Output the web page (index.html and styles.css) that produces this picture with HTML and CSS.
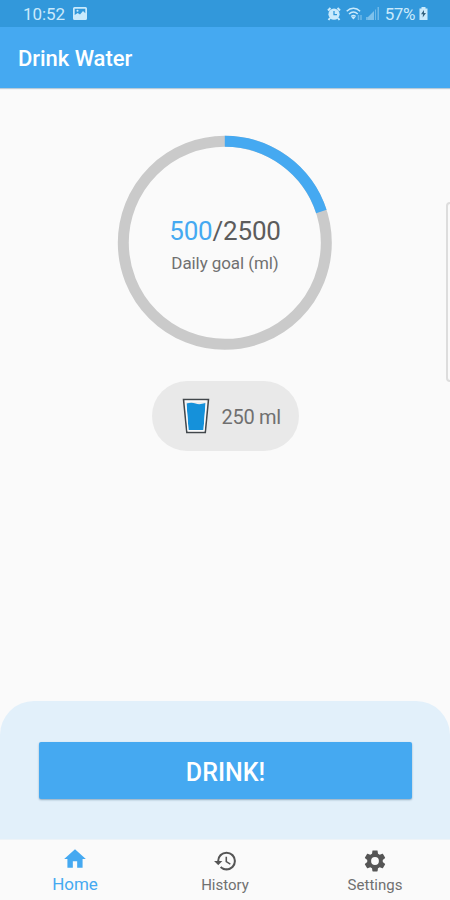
FILE: index.html
```html
<!DOCTYPE html>
<html lang="en">
<head>
<meta charset="utf-8">
<title>Drink Water</title>
<link rel="stylesheet" href="styles.css">
</head>
<body>
<div class="status">
  <span class="time">10:52</span>
  <svg class="photo" width="14" height="13" viewBox="0 0 14 13"><path fill="currentColor" fill-rule="evenodd" d="M1.5 0h11A1.5 1.5 0 0 1 14 1.500v10a1.500 1.500 0 0 1-1.500 1.500h-11A1.500 1.500 0 0 1 0 11.500v-10A1.500 1.500 0 0 1 1.500 0zM1.700 1.800v6.200l3-2 2.300 1.500 3-3.500 2.300 2.200V1.800z"/><circle cx="4.500" cy="3.800" r="1" fill="currentColor"/></svg>
  <span class="spacer"></span>
  <svg class="alarm" width="14" height="14" viewBox="0 0 14 14"><g fill="none" stroke="currentColor" stroke-width="2"><path d="M1 3.500 3.500 1M13 3.500 10.500 1M3 11l-1.500 2M11 11l1.500 2"/></g><circle cx="7" cy="7.200" r="5.600" fill="currentColor"/><path class="hands" d="M7 4v3.600h3"/></svg>
  <svg class="wifi" width="17" height="14" viewBox="0 0 17 14"><g fill="none" stroke="currentColor" stroke-width="1.500"><path d="M.7 4.200c4-3.800 9.500-3.800 13.400 0M3 7c2.700-2.500 6.200-2.500 8.800 0M5.200 9.500c1.500-1.300 3-1.300 4.500 0"/></g><path d="m5.400 10.200 2 2.400 2-2.400q-2-1.500-4 0z" fill="currentColor"/><path class="faint" d="M12.500 8v5M15 8v5" stroke="currentColor" stroke-width="1.500"/></svg>
  <svg class="signal" width="13" height="13" viewBox="0 0 13 13"><path class="faint" d="M0 13h1.500v-3H0zM9 13h1V2.500H9zM11.500 13H13V0h-1.500z" fill="currentColor"/><path d="M1.500 13v-2.500L8 4v9z" fill="currentColor" opacity=".5"/></svg>
  <span class="percent">57%</span>
  <svg class="battery" width="9" height="13" viewBox="0 0 9 13"><path fill="currentColor" d="M2.500 0h4v1.500H8.500V13H.5V1.500h2z"/><path class="bolt" d="m5 3-3 4.300h2L3.700 10.500 7 6H5z"/></svg>
</div>
<header class="bar">Drink Water</header>
<main class="content">
  <div class="ring">
    <svg class="dial" viewBox="0 0 216 216"><circle class="track" cx="108" cy="108" r="101.700"/><circle class="value" cx="108" cy="108" r="101.700" pathLength="100" transform="rotate(-90 108 108)"/></svg>
    <div class="label">
      <div class="amount"><span class="current">500</span>/2500</div>
      <div class="goal">Daily goal (ml)</div>
    </div>
  </div>
  <div class="cup">
    <svg width="28" height="36" viewBox="0 0 28 36"><path d="M1.500 1.500h25L23.300 34.500H4.800z" fill="#eee" stroke="#42474b" stroke-width="1.500"/><path d="M4.500 5.500q5-1.500 9 0t10-.5L21.500 32H6.500z" fill="#1591da"/><path d="M3 3.200h21.500M3.800 4.500 6.100 32.800h15.800L24.300 4" fill="none" stroke="#fff" stroke-width="1"/></svg>
    <span class="volume">250 ml</span>
  </div>
  <div class="edge"></div>
</main>
<section class="panel"><button class="drink">DRINK!</button></section>
<nav class="tabs">
  <a class="tab active"><svg width="26" height="26" viewBox="0 0 24 24"><path fill="currentColor" d="M10 20v-6h4v6h5v-8h3L12 3 2 12h3v8z"/></svg><span>Home</span></a>
  <a class="tab"><svg width="25" height="25" viewBox="0 0 24 24"><path fill="currentColor" d="M13 3a9 9 0 0 0-9 9H1l3.890 3.890.07.14L9 12H6c0-3.870 3.130-7 7-7s7 3.130 7 7-3.130 7-7 7c-1.930 0-3.680-.79-4.940-2.060l-1.420 1.420A8.950 8.950 0 0 0 13 21a9 9 0 0 0 0-18zm-1 5v5l4.280 2.540.72-1.210-3.500-2.080V8z"/></svg><span>History</span></a>
  <a class="tab"><svg width="26" height="26" viewBox="0 0 24 24"><path fill="currentColor" d="M19.140 12.940c.04-.3.060-.61.060-.94 0-.32-.02-.64-.07-.94l2.030-1.580c.18-.14.230-.41.120-.61l-1.920-3.320c-.12-.22-.37-.29-.59-.22l-2.390.96c-.5-.38-1.030-.7-1.620-.94l-.36-2.540c-.04-.24-.24-.41-.48-.41h-3.840c-.24 0-.43.17-.47.41l-.36 2.540c-.59.240-1.130.57-1.620.94l-2.390-.96c-.22-.08-.47 0-.59.22L2.740 8.870c-.12.210-.08.470.12.610l2.030 1.580c-.05.300-.09.630-.09.940s.02.640.07.940l-2.030 1.580c-.18.140-.23.410-.12.610l1.920 3.320c.12.220.37.290.59.220l2.390-.96c.5.380 1.030.7 1.620.94l.36 2.540c.05.240.24.410.48.410h3.840c.24 0 .44-.17.47-.41l.36-2.540c.59-.24 1.130-.56 1.620-.94l2.390.96c.22.080.47 0 .59-.22l1.920-3.320c.12-.22.070-.47-.12-.61zM12 15.600A3.600 3.600 0 1 1 12 8.400a3.600 3.600 0 0 1 0 7.200z"/></svg><span>Settings</span></a>
</nav>
</body>
</html>
```
FILE: styles.css
```css
* { box-sizing: border-box; }
body {
  margin: 0;
  width: 450px;
  height: 900px;
  display: flex;
  flex-direction: column;
  overflow: hidden;
  background: #fafafa;
  font-family: Roboto, sans-serif;
  color: #707070;
}
svg { display: block; flex: none; }
.status {
  height: 27px;
  display: flex;
  align-items: center;
  padding: 0 22px 0 23px;
  background: #3298db;
  color: #caeafc;
  font-size: 17px;
}
.time { letter-spacing: -.1px; }
.photo { margin-left: 8px; }
.spacer { flex: 1; }
.hands { fill: none; stroke: #3298db; stroke-width: 1.300; }
.wifi { margin-left: 5px; }
.signal { margin-left: 3px; }
.faint { opacity: .4; }
.percent { margin-left: 6px; letter-spacing: -.4px; }
.battery { margin-left: 4px; }
.bolt { fill: #34627e; }
.bar {
  height: 61px;
  padding-left: 18px;
  line-height: 64px;
  background: #45a9f1;
  box-shadow: 0 1px 1px #b9cbd8;
  color: #fff;
  font-size: 22px;
  font-weight: 500;
  letter-spacing: -.05px;
}
.content {
  position: relative;
  flex: 1;
  display: flex;
  flex-direction: column;
  align-items: center;
  padding-top: 47px;
}
.ring { display: grid; width: 216px; height: 216px; }
.dial, .label { grid-area: 1 / 1; }
.dial { margin-left: .4px; }
.track, .value { fill: none; stroke: #cacaca; stroke-width: 11; }
.value { stroke: #45a9f1; stroke-dasharray: 20 80; }
.label { padding-top: 79px; text-align: center; }
.amount { font-size: 26px; line-height: 34px; color: #5c5c5c; letter-spacing: -.2px; }
.current { color: #45a9f1; }
.goal { font-size: 17px; line-height: 30px; letter-spacing: -.08px; }
.cup {
  width: 147px;
  height: 70px;
  margin-top: 30px;
  border-radius: 35px;
  display: flex;
  align-items: center;
  gap: 12px;
  padding-left: 30px;
  background: #e9e9e9;
  font-size: 20px;
}
.volume { padding-top: 2px; letter-spacing: -.3px; }
.edge {
  position: absolute;
  right: -4px;
  top: 114px;
  width: 8px;
  height: 180px;
  border: 2px solid #ddd;
  border-radius: 6px;
}
.panel {
  height: 138px;
  padding: 41px 38px 0 39px;
  background: #e2f0fa;
  border-radius: 34px 34px 0 0;
}
.drink {
  display: block;
  width: 100%;
  height: 57px;
  padding: 3px 0 0;
  border: 0;
  border-radius: 2px;
  background: #45a9f1;
  box-shadow: 0 1px 2px #91aabd;
  color: #fff;
  font: 500 25px Roboto, sans-serif;
}
.tabs {
  height: 61px;
  display: grid;
  grid-template-columns: repeat(3, 1fr);
  border-top: 1px solid #edf3f7;
}
.tab {
  display: flex;
  flex-direction: column;
  align-items: center;
  padding-top: 8px;
  font-size: 15px;
  line-height: 22px;
}
.tab svg { height: 26px; color: #555; }
.active { padding-top: 6px; color: #45a9f1; font-size: 17px; line-height: 24px; }
.active svg { color: #45a9f1; }
```
